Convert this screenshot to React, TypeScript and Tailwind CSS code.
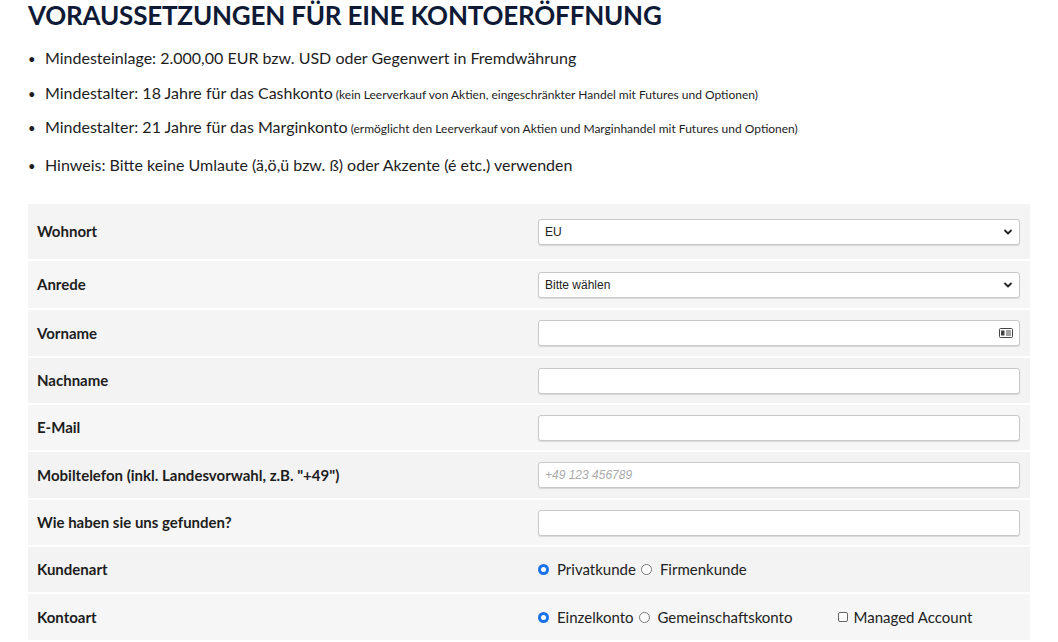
import React from "react";

const rows: { label: string; h: number; bg: string; kind: string }[] = [
  { label: "Wohnort", h: 55, bg: "bg-[#f4f4f4]", kind: "eu" },
  { label: "Anrede", h: 47, bg: "bg-[#f6f6f6]", kind: "anrede" },
  { label: "Vorname", h: 46, bg: "bg-[#f4f4f4]", kind: "vorname" },
  { label: "Nachname", h: 45, bg: "bg-[#f3f3f3]", kind: "text" },
  { label: "E-Mail", h: 45, bg: "bg-[#f6f6f6]", kind: "text" },
  { label: "Mobiltelefon (inkl. Landesvorwahl, z.B. \"+49\")", h: 46, bg: "bg-[#f3f3f3]", kind: "tel" },
  { label: "Wie haben sie uns gefunden?", h: 45, bg: "bg-[#f6f6f6]", kind: "text" },
  { label: "Kundenart", h: 45, bg: "bg-[#f3f3f3]", kind: "kunde" },
  { label: "Kontoart", h: 46, bg: "bg-[#f6f6f6]", kind: "konto" },
];

const Chevron = () => (
  <svg width="10" height="10" viewBox="0 0 10 10" className="ml-auto">
    <path d="M2 3.5 L5 6.5 L8 3.5" fill="none" stroke="#222" strokeWidth="1.8" strokeLinecap="round" strokeLinejoin="round" />
  </svg>
);

const Radio = ({ on }: { on?: boolean }) =>
  on ? (
    <span className="inline-flex w-[11px] h-[11px] rounded-full bg-[#1a73e8] items-center justify-center"><span className="w-[5px] h-[5px] rounded-full bg-white" /></span>
  ) : (
    <span className="inline-block w-[11px] h-[11px] rounded-full border border-[#777] bg-white" />
  );

const boxCls = "h-[26px] w-[482px] bg-white border border-[#c9c9c9] rounded-[3px] shadow-[0_1px_1px_rgba(0,0,0,0.12)] flex items-center px-[6px] text-[12px] text-[#222] font-[Arial,Liberation_Sans,sans-serif]";

function Field({ kind }: { kind: string }) {
  if (kind === "eu") return <div className={boxCls + " w-[477px]"}>EU<Chevron /></div>;
  if (kind === "anrede") return <div className={boxCls}>Bitte wählen<Chevron /></div>;
  if (kind === "vorname")
    return (
      <div className={boxCls}>
        <svg width="14" height="10" viewBox="0 0 14 10" className="ml-auto">
          <rect x="0.5" y="0.5" width="13" height="9" rx="1" fill="none" stroke="#444" />
          <rect x="2" y="2.5" width="3.5" height="5" fill="#444" />
          <path d="M7 3h5M7 5h5M7 7h5" stroke="#444" />
        </svg>
      </div>
    );
  if (kind === "tel") return <div className={boxCls + " italic text-[#aaa] text-[11px]"}>+49 123 456789</div>;
  if (kind === "kunde")
    return (
      <div className="flex items-center text-[15px] text-[#222]">
        <Radio on /><span className="ml-[8px]">Privatkunde</span>
        <span className="ml-[5px]"><Radio /></span><span className="ml-[8px]">Firmenkunde</span>
      </div>
    );
  if (kind === "konto")
    return (
      <div className="flex items-center text-[15px] text-[#222]">
        <Radio on /><span className="ml-[8px]">Einzelkonto</span>
        <span className="ml-[5px]"><Radio /></span><span className="ml-[8px]">Gemeinschaftskonto</span>
        <span className="ml-[46px] inline-block w-[10px] h-[10px] border border-[#666] rounded-[2px] bg-white" />
        <span className="ml-[5px]">Managed Account</span>
      </div>
    );
  return <div className={boxCls} />;
}

export default function App() {
  return (
    <div className="w-[1058px] h-[642px] overflow-hidden bg-white font-[Lato,sans-serif] text-[#1d1d1d]">
      <div className="pl-[28px] pr-[28px]">
        <h1 className="text-[26px] font-bold text-[#0e1a36] leading-[30px] tracking-[-0.2px]">VORAUSSETZUNGEN FÜR EINE KONTOERÖFFNUNG</h1>
        <ul className="mt-[18px] text-[16px] leading-[20px]">
          {[
            ["Mindesteinlage: 2.000,00 EUR bzw. USD oder Gegenwert in Fremdwährung", "", "mb-[13px]"],
            ["Mindestalter: 18 Jahre für das Cashkonto", " (kein Leerverkauf von Aktien, eingeschränkter Handel mit Futures und Optionen)", "mb-[12px]"],
            ["Mindestalter: 21 Jahre für das Marginkonto", " (ermöglicht den Leerverkauf von Aktien und Marginhandel mit Futures und Optionen)", "mb-[16px]"],
            ["Hinweis: Bitte keine Umlaute (ä,ö,ü bzw. ß) oder Akzente (é etc.) verwenden", "", ""],
          ].map(([a, b, m], i) => (
            <li key={i} className={"flex items-baseline " + m}>
              <span className="w-[17px] text-[13px]">•</span>
              <span>{a}<span className="text-[12px]">{b}</span></span>
            </li>
          ))}
        </ul>
        <div className="mt-[27px] flex flex-col gap-[2px] w-[1002px]">
          {rows.map((r, i) => (
            <div key={i} className={"flex items-center " + r.bg} style={{ height: r.h }}>
              <div className="w-[510px] pl-[9px] text-[15px] font-bold text-[#1d1d1d]">{r.label}</div>
              <div><Field kind={r.kind} /></div>
            </div>
          ))}
        </div>
      </div>
    </div>
  );
}
